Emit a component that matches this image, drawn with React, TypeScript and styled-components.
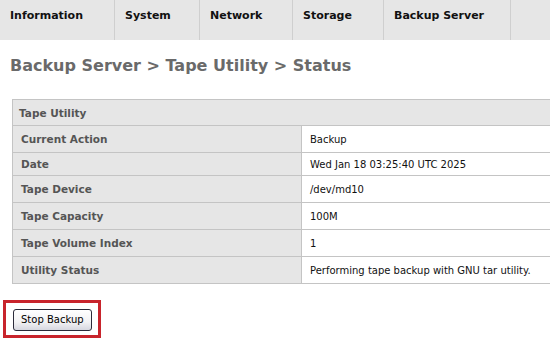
import { FC } from "react";
import styled, { createGlobalStyle } from "styled-components";

const GlobalStyle = createGlobalStyle`
  html, body {
    margin: 0;
    padding: 0;
    background: #ffffff;
    overflow: hidden;
  }
  body {
    font-family: "DejaVu Sans", Verdana, sans-serif;
  }
`;

const tabs = [
  { label: "Information", width: 115 },
  { label: "System", width: 85 },
  { label: "Network", width: 93 },
  { label: "Storage", width: 91 },
  { label: "Backup Server", width: 127 },
];

const rows = [
  { label: "Current Action", value: "Backup", height: 27 },
  { label: "Date", value: "Wed Jan 18 03:25:40 UTC 2025", height: 23 },
  { label: "Tape Device", value: "/dev/md10", height: 27 },
  { label: "Tape Capacity", value: "100M", height: 27 },
  { label: "Tape Volume Index", value: "1", height: 27 },
  { label: "Utility Status", value: "Performing tape backup with GNU tar utility.", height: 27 },
];

const App: FC = () => {
  return (
    <Page>
      <GlobalStyle />
      <NavBar>
        {tabs.map((t) => (
          <NavItem key={t.label} $width={t.width}>
            {t.label}
          </NavItem>
        ))}
      </NavBar>

      <Content>
        <Title>Backup Server &gt; Tape Utility &gt; Status</Title>

        <StatusTable>
          <HeaderRow>Tape Utility</HeaderRow>
          {rows.map((r) => (
            <Row key={r.label} $height={r.height}>
              <LabelCell>{r.label}</LabelCell>
              <ValueCell>{r.value}</ValueCell>
            </Row>
          ))}
        </StatusTable>

        <Highlight>
          <ActionButton type="button">Stop Backup</ActionButton>
        </Highlight>
      </Content>
    </Page>
  );
};

export default App;

const Page = styled.div`
  width: 550px;
  height: 340px;
  overflow: hidden;
`;

const NavBar = styled.div`
  display: flex;
  height: 40px;
  background: #e6e6e6;
`;

const NavItem = styled.div<{ $width: number }>`
  box-sizing: border-box;
  width: ${(p) => p.$width}px;
  height: 40px;
  padding: 9px 0 0 10px;
  border-right: 1px solid #cfcfcf;
  font-size: 11px;
  font-weight: bold;
  color: #111;
  white-space: nowrap;
`;

const Content = styled.div`
  display: flex;
  flex-direction: column;
`;

const Title = styled.h1`
  margin: 15px 0 0 10px;
  height: 44px;
  font-size: 16px;
  font-weight: bold;
  color: #6a6a6a;
  line-height: 22px;
`;

const StatusTable = styled.div`
  box-sizing: border-box;
  margin-left: 12px;
  width: 560px;
  border: 1px solid #c4c4c4;
  border-bottom: none;
`;

const HeaderRow = styled.div`
  box-sizing: border-box;
  height: 26px;
  padding: 0 0 0 6px;
  display: flex;
  align-items: center;
  background: #e6e6e6;
  border-bottom: 1px solid #c4c4c4;
  font-size: 10.5px;
  font-weight: bold;
  color: #555;
`;

const Row = styled.div<{ $height: number }>`
  box-sizing: border-box;
  display: grid;
  grid-template-columns: 289px 1fr;
  height: ${(p) => p.$height}px;
  border-bottom: 1px solid #c4c4c4;
`;

const LabelCell = styled.div`
  display: flex;
  align-items: center;
  padding-left: 8px;
  background: #e6e6e6;
  border-right: 1px solid #c4c4c4;
  font-size: 10.5px;
  font-weight: bold;
  color: #555;
`;

const ValueCell = styled.div`
  display: flex;
  align-items: center;
  padding-left: 8px;
  font-size: 10px;
  color: #111;
`;

const Highlight = styled.div`
  box-sizing: border-box;
  align-self: flex-start;
  margin: 16px 0 0 3px;
  padding: 5px 6px 4px 7px;
  border: 3px solid #c8242c;
`;

const ActionButton = styled.button`
  height: 22px;
  padding: 0 7px;
  border: 1px solid #2b2b3a;
  border-radius: 3px;
  background: linear-gradient(#ffffff, #f2f2f4 60%, #d6d7e0);
  font-family: "DejaVu Sans", Verdana, sans-serif;
  font-size: 10px;
  color: #000;
`;
